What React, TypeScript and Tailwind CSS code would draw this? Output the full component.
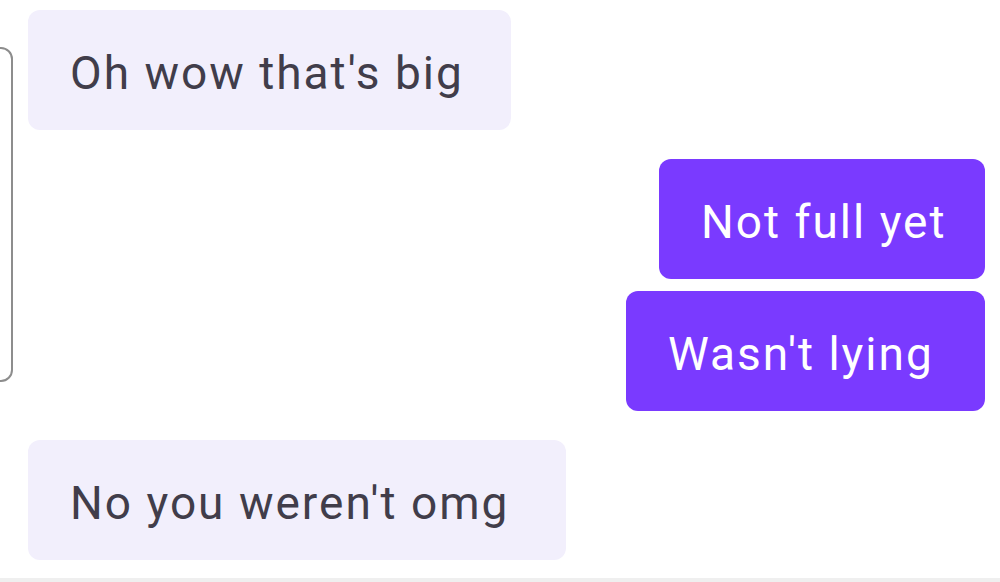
type Message = {
  id: number;
  text: string;
  mine: boolean;
  width: string;
};

const messages: Message[] = [
  { id: 1, text: "Oh wow that's big", mine: false, width: "w-[483px]" },
  { id: 2, text: "Not full yet", mine: true, width: "w-[326px]" },
  { id: 3, text: "Wasn't lying", mine: true, width: "w-[359px]" },
  { id: 4, text: "No you weren't omg", mine: false, width: "w-[538px]" },
];

function Bubble({ message, tight }: { message: Message; tight: boolean }) {
  const side = message.mine
    ? "self-end mr-[15px] bg-[#7a3aff] text-white pl-[42px]"
    : "self-start ml-[28px] bg-[#f2effc] text-[#413d4a] pl-[42px]";
  return (
    <div
      className={`${side} ${message.width} ${tight ? "mt-[12px]" : "mt-[29px]"} h-[120px] pt-[6px] rounded-[12px] flex items-center`}
    >
      <span className="text-[46px] leading-none tracking-[2px] whitespace-nowrap">{message.text}</span>
    </div>
  );
}

export default function App() {
  return (
    <div
      className="relative w-[1000px] h-[582px] bg-white overflow-hidden"
      style={{ fontFamily: "Roboto, 'Noto Sans', sans-serif" }}
    >
      {/* edge of the media card peeking in from the left */}
      <div className="absolute left-[-12px] top-[47px] w-[25px] h-[335px] rounded-[12px] border-2 border-[#8d8d8d]" />

      <div className="flex flex-col pt-[10px] -mt-[29px]">
        {messages.map((m, i) => (
          <Bubble key={m.id} message={m} tight={i > 0 && m.mine && messages[i - 1].mine} />
        ))}
      </div>

      <div className="absolute left-0 right-0 bottom-0 h-[4px] bg-[#efefef]" />
    </div>
  );
}
